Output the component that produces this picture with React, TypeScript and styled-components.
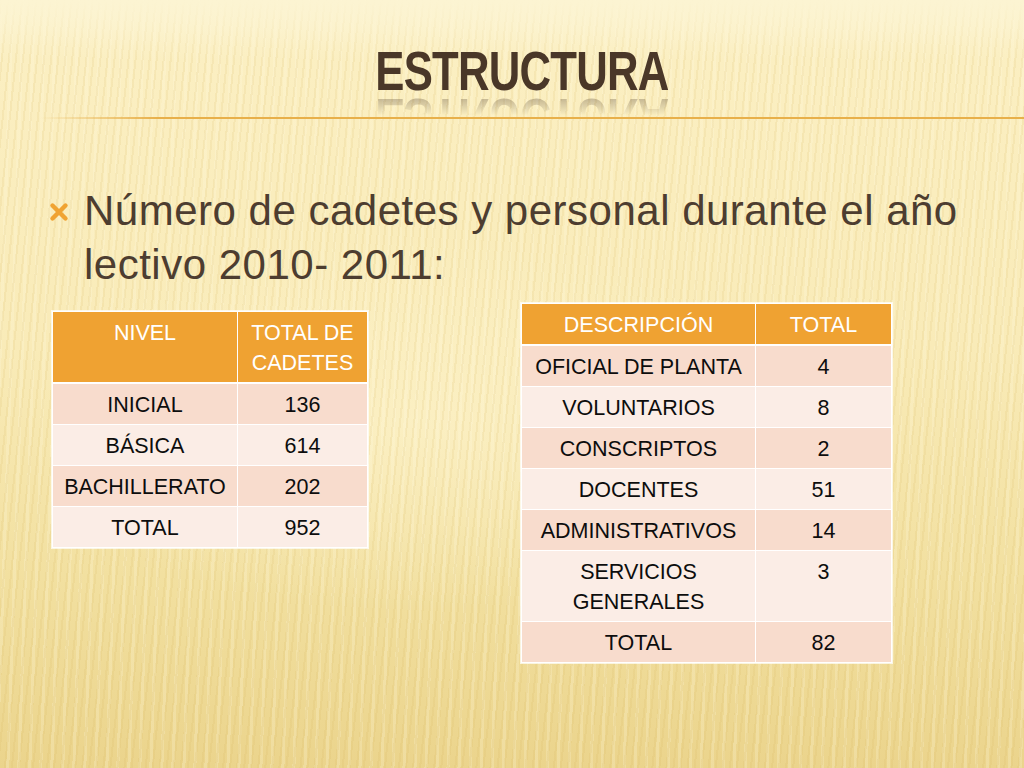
import React from 'react';
import styled, { createGlobalStyle } from 'styled-components';

const GlobalStyle = createGlobalStyle`
    html, body {
        margin: 0;
        padding: 0;
        background: #fbf0c4;
    }
    body {
        font-family: "Liberation Sans", Arial, sans-serif;
    }
`;

const cadetes = [
    { nivel: 'INICIAL', total: '136' },
    { nivel: 'BÁSICA', total: '614' },
    { nivel: 'BACHILLERATO', total: '202' },
    { nivel: 'TOTAL', total: '952' },
];

const personal = [
    { desc: 'OFICIAL DE PLANTA', total: '4' },
    { desc: 'VOLUNTARIOS', total: '8' },
    { desc: 'CONSCRIPTOS', total: '2' },
    { desc: 'DOCENTES', total: '51' },
    { desc: 'ADMINISTRATIVOS', total: '14' },
    { desc: 'SERVICIOS GENERALES', total: '3', wrap: true },
    { desc: 'TOTAL', total: '82' },
];

const Cross = () => (
    <svg width="20" height="20" viewBox="0 0 20 20">
        <path d="M3.5 3.5 L16.5 16.5 M16.5 3.5 L3.5 16.5" stroke="#f0a332" strokeWidth="4.4" strokeLinecap="round" />
    </svg>
);

export default function App() {
    return <Slide>
        <GlobalStyle />
        <Header>
            <Title>ESTRUCTURA</Title>
        </Header>
        <Rule />
        <Bullet>
            <BulletMark><Cross /></BulletMark>
            <BulletText>Número de cadetes y personal durante el año lectivo 2010- 2011:</BulletText>
        </Bullet>
        <Tables>
            <Table $offset={8}>
                <colgroup>
                    <col style={{ width: 185 }} />
                    <col style={{ width: 130 }} />
                </colgroup>
                <thead>
                    <tr>
                        <Th>NIVEL</Th>
                        <Th>TOTAL DE<br />CADETES</Th>
                    </tr>
                </thead>
                <tbody>
                    {cadetes.map((row, i) => <Row key={row.nivel} $odd={i % 2 === 0}>
                        <Td>{row.nivel}</Td>
                        <Td>{row.total}</Td>
                    </Row>)}
                </tbody>
            </Table>
            <Table $offset={0}>
                <colgroup>
                    <col style={{ width: 234 }} />
                    <col style={{ width: 136 }} />
                </colgroup>
                <thead>
                    <tr>
                        <Th>DESCRIPCIÓN</Th>
                        <Th>TOTAL</Th>
                    </tr>
                </thead>
                <tbody>
                    {personal.map((row, i) => <Row key={row.desc} $odd={i % 2 === 0}>
                        <Td>{row.wrap ? <Wrap>{row.desc}</Wrap> : row.desc}</Td>
                        <Td>{row.total}</Td>
                    </Row>)}
                </tbody>
            </Table>
        </Tables>
    </Slide>;
}

const Slide = styled.div`
    width: 1024px;
    height: 768px;
    overflow: hidden;
    display: flex;
    flex-direction: column;
    background:
        linear-gradient(180deg, #fcf4d2 0px, rgba(252, 244, 210, 0) 60px),
        repeating-linear-gradient(96deg, rgba(210, 175, 85, 0.13) 0 2px, rgba(255, 255, 255, 0) 2px 7px),
        repeating-linear-gradient(92deg, rgba(255, 250, 225, 0.22) 0 3px, rgba(255, 255, 255, 0) 3px 11px),
        radial-gradient(ellipse 55% 35% at 40% 55%, rgba(255, 246, 210, 0.55), rgba(255, 246, 210, 0) 70%),
        linear-gradient(180deg, #fcf3cf 0%, #fbefc2 6%, #f9ebb8 45%, #f2e0a0 75%, #ebd48c 100%);
`;

const Header = styled.div`
    padding-top: 43px;
    padding-left: 20px;
    display: flex;
    justify-content: center;
`;

const Title = styled.h1`
    margin: 0;
    display: inline-block;
    font-family: "Liberation Sans", Arial, sans-serif;
    font-weight: 700;
    font-size: 56px;
    line-height: 56px;
    color: #4a3728;
    letter-spacing: -1px;
    transform: scaleX(0.78);
    -webkit-box-reflect: below -9px linear-gradient(transparent 55%, rgba(255, 255, 255, 0.45));
`;

const Rule = styled.div`
    margin: 18px 0 0 40px;
    height: 2px;
    background: linear-gradient(90deg, rgba(232, 176, 74, 0) 0%, #e8b04a 12%, #e8b04a 100%);
`;

const Bullet = styled.div`
    margin-top: 65px;
    display: flex;
    padding-left: 49px;
    padding-right: 30px;
`;

const BulletMark = styled.div`
    width: 35px;
    padding-top: 18px;
    flex-shrink: 0;
`;

const BulletText = styled.p`
    margin: 0;
    font-family: "Liberation Sans", Arial, sans-serif;
    font-size: 42px;
    line-height: 54px;
    color: #4d3d30;
    letter-spacing: 0.5px;
    max-width: 900px;
`;

const Tables = styled.div`
    margin-top: 11px;
    display: flex;
    align-items: flex-start;
    padding-left: 52px;
    gap: 153px;
`;

const Table = styled.table<{ $offset: number }>`
    margin-top: ${p => p.$offset}px;
    border-collapse: collapse;
    table-layout: fixed;
    font-family: "Liberation Sans", Arial, sans-serif;
    font-size: 21.5px;
    line-height: 30px;
    text-align: center;
    box-shadow: 0 0 0 1px rgba(255, 255, 255, 0.7);
`;

const Th = styled.th`
    background: #efa232;
    color: #ffffff;
    font-weight: 400;
    vertical-align: top;
    padding: 6px 4px 4px;
    border: 1px solid #ffffff;
    border-bottom-width: 2px;
    white-space: nowrap;
`;

const Row = styled.tr<{ $odd: boolean }>`
    background: ${p => p.$odd ? '#f8dccd' : '#fbede6'};
`;

const Td = styled.td`
    color: #0d0d0d;
    vertical-align: top;
    padding: 6px 4px 4px;
    border: 1px solid #ffffff;
    white-space: nowrap;
`;

const Wrap = styled.span`
    display: inline-block;
    white-space: normal;
    width: 150px;
`;
